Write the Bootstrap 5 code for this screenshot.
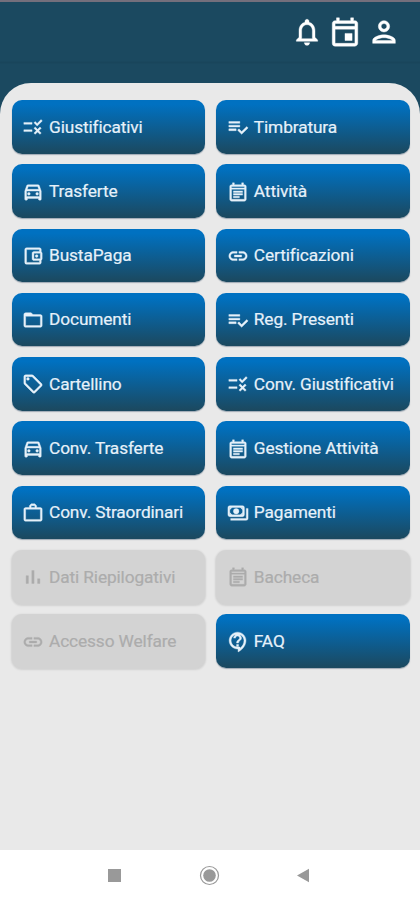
<!DOCTYPE html>
<html lang="it">
<head>
<meta charset="utf-8">
<meta name="viewport" content="width=device-width, initial-scale=1">
<title>Menu</title>
<link href="https://cdn.jsdelivr.net/npm/bootstrap@5.3.0/dist/css/bootstrap.min.css" rel="stylesheet">
<style>
body{font-family:Roboto,"Liberation Sans",sans-serif;background:#1b4960;height:900px;overflow:hidden}
svg{fill:currentColor;flex:none;display:block}
.topbar{height:83px;border-top:2px solid #746f7c;padding:13px 19.5px 0 0;gap:4.4px;background:linear-gradient(#1b4960 0 59px,#19455b 60px 61px,#1b4960 62px)}
.topbar svg{width:34px;height:34px;stroke:currentColor;stroke-width:.3}
.topbar .bell{width:32px;height:32px;margin:1px}
.panel{background:#e9e9e9;border-radius:31px 31px 0 0;padding:17px 9.8px 0 11.5px}
.tiles{display:grid;grid-template-columns:1fr 1fr;column-gap:11px;row-gap:10.8px}
.tile{height:53.5px;border:0;border-radius:10px;padding:1px 0 0 10.5px;gap:5px;font-size:17.3px;line-height:1;letter-spacing:-.12px;color:#e6f1fa;background:linear-gradient(#0071c1 8%,#1b4960 98%);box-shadow:0 1px 1px rgba(20,50,80,.35);white-space:nowrap}
.tile svg{width:22px;height:22px;stroke:currentColor;stroke-width:.4}
.tile span{-webkit-text-stroke:.2px currentColor}
.tile:disabled{background:#d3d3d3;color:#acacac;opacity:1;box-shadow:0 1px 2px 1px rgba(0,0,0,.1)}
.sysnav{height:50px;color:#999}
</style>
<script src="https://cdn.jsdelivr.net/npm/bootstrap@5.3.0/dist/js/bootstrap.bundle.min.js"></script>
</head>
<body class="d-flex flex-column m-0">
<svg class="d-none">
<symbol id="rule" viewBox="0 0 24 24"><path d="M16.54 11L13 7.46l1.41-1.41 2.12 2.12 4.24-4.24 1.41 1.41L16.54 11zM11 7H2v2h9V7zm10 6.41L19.59 12 17 14.59 14.41 12 13 13.41 15.59 16 13 18.59 14.41 20 17 17.41 19.59 20 21 18.59 18.41 16 21 13.41zM11 15H2v2h9v-2z"/></symbol>
<symbol id="listcheck" viewBox="0 0 24 24"><path d="M14 10H2v2h12v-2zm0-4H2v2h12V6zM2 16h8v-2H2v2zm19.5-4.5L23 13l-6.99 7-4.51-4.5L13 14l3.01 3 5.49-5.5z"/></symbol>
<symbol id="car" viewBox="0 0 24 24"><path d="M18.92 5.01C18.72 4.42 18.16 4 17.5 4h-11c-.66 0-1.21.42-1.42 1.01L3 11v9c0 .55.45 1 1 1h1c.55 0 1-.45 1-1v-1h12v1c0 .55.45 1 1 1h1c.55 0 1-.45 1-1v-9l-2.08-5.99zM6.85 6h10.29l1.08 3.11H5.77L6.85 6zM19 17H5v-6h14v6z"/><circle cx="7.5" cy="14" r="1.5"/><circle cx="16.5" cy="14" r="1.5"/></symbol>
<symbol id="note" viewBox="0 0 24 24"><path d="M19 4h-1V2h-2v2H8V2H6v2H5c-1.110 0-2 .9-2 2v14c0 1.100.89 2 2 2h14c1.100 0 2-.9 2-2V6c0-1.100-.9-2-2-2zm0 16H5V9h14v11zm0-12.500H5V6h14v1.500zM7 10.800h10v1.700H7zM7 13.700h10v1.700H7zM7 16.600h6.500v1.700H7z"/></symbol>
<symbol id="wallet" viewBox="0 0 24 24"><path d="M21 7.28V5c0-1.100-.9-2-2-2H5a2 2 0 0 0-2 2v14a2 2 0 0 0 2 2h14c1.100 0 2-.9 2-2v-2.280A2 2 0 0 0 22 15V9a2 2 0 0 0-1-1.720zM20 9v6h-7V9h7zM5 19V5h14v2h-6c-1.100 0-2 .9-2 2v6c0 1.100.9 2 2 2h6v2H5z"/><circle cx="16" cy="12" r="1.500"/></symbol>
<symbol id="chain" viewBox="0 0 24 24"><path d="M3.900 12c0-1.710 1.390-3.100 3.100-3.100h4V7H7c-2.760 0-5 2.240-5 5s2.240 5 5 5h4v-1.900H7c-1.710 0-3.100-1.390-3.100-3.100zM8 13h8v-2H8v2zm9-6h-4v1.900h4c1.710 0 3.100 1.390 3.100 3.100s-1.390 3.100-3.100 3.100h-4V17h4c2.760 0 5-2.240 5-5s-2.240-5-5-5z"/></symbol>
<symbol id="folder" viewBox="0 0 24 24"><path d="M20 6h-8l-2-2H4c-1.100 0-1.990.9-1.990 2L2 18c0 1.100.9 2 2 2h16c1.100 0 2-.9 2-2V8c0-1.100-.9-2-2-2zm0 12H4V8h16v10z"/></symbol>
<symbol id="tag" viewBox="0 0 24 24"><path d="M21.410 11.580l-9-9C12.050 2.220 11.550 2 11 2H4c-1.100 0-2 .9-2 2v7c0 .55.22 1.050.59 1.420l9 9c.36.36.86.58 1.410.58s1.050-.22 1.410-.59l7-7c.37-.36.59-.86.59-1.410s-.23-1.060-.59-1.420zM13 20.010L4 11V4h7v-.01l9 9-7 7.020z"/><circle cx="6.500" cy="6.500" r="1.500"/></symbol>
<symbol id="bag" viewBox="0 0 24 24"><path d="M20 6h-4V4l-2-2h-4L8 4v2H4c-1.100 0-2 .9-2 2v11c0 1.100.9 2 2 2h16c1.100 0 2-.9 2-2V8c0-1.100-.9-2-2-2zM10 4h4v2h-4V4zM4 8h16v11H4V8z"/></symbol>
<symbol id="cash" viewBox="0 0 24 24"><path fill-rule="evenodd" d="M3 4h14a2 2 0 0 1 2 2v8a2 2 0 0 1-2 2H3a2 2 0 0 1-2-2V6a2 2 0 0 1 2-2zm0 2v8h14V6zM21.500 7H23v11a2 2 0 0 1-2 2H4v-2h17V7z"/><circle cx="10" cy="10" r="3"/><path d="M3 6h2.500L3 8.500zM17 6h-2.500L17 8.500zM3 14h2.500L3 11.500zM17 14h-2.500l2.500-2.500z"/></symbol>
<symbol id="bars" viewBox="0 0 24 24"><path d="M4.500 10.500H7V19H4.500zM10.700 5h2.500v14h-2.500zM17 14h2.500v5H17z"/></symbol>
<symbol id="help" viewBox="0 0 24 24"><path transform="translate(-.9 -.9) scale(1.080)" d="M11.500 2C6.810 2 3 5.810 3 10.500S6.810 19 11.500 19h.5v3c4.860-2.340 8-7 8-11.500C20 5.810 16.190 2 11.500 2zm2.500 16.300V17h-2.500C7.910 17 5 14.090 5 10.500S7.910 4 11.500 4 18 6.910 18 10.500c0 2.900-1.500 5.800-4 7.800zM10.500 14.500h2v2h-2zM12.500 13h-2c0-3.250 3-3 3-5 0-1.100-.9-2-2-2s-2 .9-2 2h-2c0-2.210 1.790-4 4-4s4 1.790 4 4c0 2.500-3 2.750-3 5z"/></symbol>
</svg>
<header class="topbar d-flex justify-content-end align-items-start text-white">
<svg class="bell" viewBox="0 0 24 24"><path d="M12 22c1.100 0 2-.9 2-2h-4c0 1.100.9 2 2 2zm6-6v-5c0-3.070-1.630-5.640-4.500-6.320V4c0-.83-.67-1.500-1.500-1.500s-1.500.67-1.500 1.500v.68C7.640 5.360 6 7.920 6 11v5l-2 2v1h16v-1l-2-2zm-2 1H8v-6c0-2.480 1.510-4.500 4-4.500s4 2.020 4 4.500v6z"/></svg>
<svg viewBox="0 0 24 24"><path d="M19 4h-1V2h-2v2H8V2H6v2H5c-1.110 0-1.990.9-1.990 2L3 20a2 2 0 0 0 2 2h14c1.100 0 2-.9 2-2V6c0-1.100-.9-2-2-2zm0 16H5V10h14v10zm0-12H5V6h14v2zM12 13h5v5h-5z"/></svg>
<svg viewBox="0 0 24 24"><path d="M12 6c1.100 0 2 .9 2 2s-.9 2-2 2-2-.9-2-2 .9-2 2-2m0 10c2.700 0 5.800 1.290 6 2H6c.23-.72 3.310-2 6-2m0-12C9.790 4 8 5.790 8 8s1.790 4 4 4 4-1.790 4-4-1.790-4-4-4zm0 10c-2.670 0-8 1.340-8 4v2h16v-2c0-2.660-5.330-4-8-4z"/></svg>
</header>
<main class="panel flex-grow-1">
<div class="tiles">
<button class="tile d-flex align-items-center"><svg><use href="#rule"/></svg><span>Giustificativi</span></button>
<button class="tile d-flex align-items-center"><svg><use href="#listcheck"/></svg><span>Timbratura</span></button>
<button class="tile d-flex align-items-center"><svg><use href="#car"/></svg><span>Trasferte</span></button>
<button class="tile d-flex align-items-center"><svg><use href="#note"/></svg><span>Attività</span></button>
<button class="tile d-flex align-items-center"><svg><use href="#wallet"/></svg><span>BustaPaga</span></button>
<button class="tile d-flex align-items-center"><svg><use href="#chain"/></svg><span>Certificazioni</span></button>
<button class="tile d-flex align-items-center"><svg><use href="#folder"/></svg><span>Documenti</span></button>
<button class="tile d-flex align-items-center"><svg><use href="#listcheck"/></svg><span>Reg. Presenti</span></button>
<button class="tile d-flex align-items-center"><svg><use href="#tag"/></svg><span>Cartellino</span></button>
<button class="tile d-flex align-items-center"><svg><use href="#rule"/></svg><span>Conv. Giustificativi</span></button>
<button class="tile d-flex align-items-center"><svg><use href="#car"/></svg><span>Conv. Trasferte</span></button>
<button class="tile d-flex align-items-center"><svg><use href="#note"/></svg><span>Gestione Attività</span></button>
<button class="tile d-flex align-items-center"><svg><use href="#bag"/></svg><span>Conv. Straordinari</span></button>
<button class="tile d-flex align-items-center"><svg><use href="#cash"/></svg><span>Pagamenti</span></button>
<button class="tile d-flex align-items-center" disabled><svg><use href="#bars"/></svg><span>Dati Riepilogativi</span></button>
<button class="tile d-flex align-items-center" disabled><svg><use href="#note"/></svg><span>Bacheca</span></button>
<button class="tile d-flex align-items-center" disabled><svg><use href="#chain"/></svg><span>Accesso Welfare</span></button>
<button class="tile d-flex align-items-center"><svg><use href="#help"/></svg><span>FAQ</span></button>
</div>
</main>
<footer class="sysnav bg-white">
<svg width="420" height="50" viewBox="0 0 420 50"><path d="M108 19h13v13h-13zM297 25.500l12-6.800v13.600z"/><circle cx="209.500" cy="25.500" r="6.300"/><circle cx="209.500" cy="25.500" r="9" fill="none" stroke="currentColor" stroke-width="1.200"/></svg>
</footer>
</body>
</html>
